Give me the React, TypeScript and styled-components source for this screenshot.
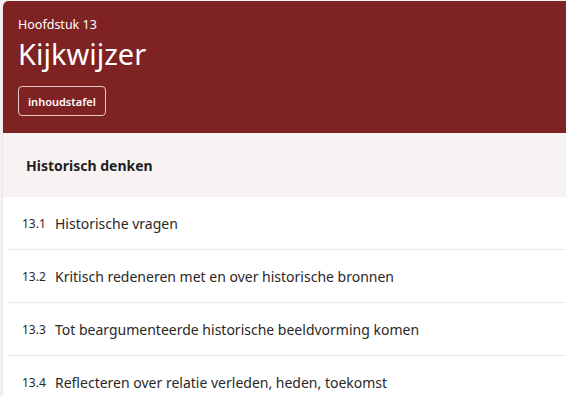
import styled, { createGlobalStyle } from 'styled-components';

const GlobalStyle = createGlobalStyle`
  html, body {
    margin: 0;
    padding: 0;
    background: #f3f0f0;
    font-family: "Noto Sans", "Open Sans", sans-serif;
  }
`;

const Card = styled.div`
  margin: 1px 0 0 2px;
  background: #ffffff;
  border-top-left-radius: 6px;
  overflow: hidden;
  height: 395px;
  border-left: 1px solid #ece8e8;
`;

const Header = styled.header`
  background: #7f2224;
  color: #ffffff;
  height: 132px;
  box-sizing: border-box;
  padding: 15px 0 0 15px;
`;

const Chapter = styled.div`
  font-size: 12.5px;
  line-height: 18px;
`;

const Title = styled.h1`
  margin: 2px 0 0;
  font-size: 29px;
  font-weight: 400;
  line-height: 36px;
`;

const TocButton = styled.button`
  margin-top: 14px;
  height: 30px;
  padding: 0 9px;
  background: transparent;
  color: #ffffff;
  border: 1px solid #e8c9c9;
  border-radius: 4px;
  font-family: inherit;
  font-size: 11px;
  font-weight: 600;
`;

const SectionHeader = styled.div`
  background: #f8f3f2;
  height: 64px;
  display: flex;
  align-items: center;
  padding-left: 23px;
  font-size: 14px;
  font-weight: 700;
  color: #231f1f;
`;

const List = styled.ul`
  list-style: none;
  margin: 0;
  padding: 0 0 0 5px;
`;

const Row = styled.li`
  height: 53px;
  display: flex;
  align-items: center;
  border-bottom: 1px solid #ebe9e9;
  box-sizing: border-box;
  color: #2b2727;
`;

const Num = styled.span`
  width: 33px;
  padding-left: 14px;
  font-size: 12px;
`;

const Label = styled.span`
  font-size: 14px;
`;

const items = [
  ['13.1', 'Historische vragen'],
  ['13.2', 'Kritisch redeneren met en over historische bronnen'],
  ['13.3', 'Tot beargumenteerde historische beeldvorming komen'],
  ['13.4', 'Reflecteren over relatie verleden, heden, toekomst'],
];

export default function App() {
  return (
    <>
      <GlobalStyle />
      <Card>
        <Header>
          <Chapter>Hoofdstuk 13</Chapter>
          <Title>Kijkwijzer</Title>
          <TocButton>inhoudstafel</TocButton>
        </Header>
        <SectionHeader>Historisch denken</SectionHeader>
        <List>
          {items.map(([n, t]) => (
            <Row key={n}>
              <Num>{n}</Num>
              <Label>{t}</Label>
            </Row>
          ))}
        </List>
      </Card>
    </>
  );
}
